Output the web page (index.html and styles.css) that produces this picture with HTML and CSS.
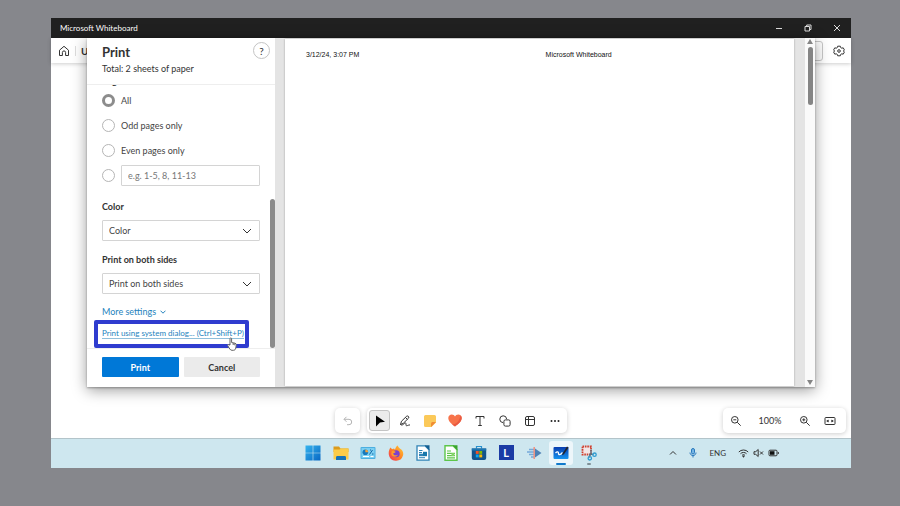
FILE: index.html
```html
<!DOCTYPE html>
<html lang="en">
<head>
<meta charset="utf-8">
<title>Microsoft Whiteboard</title>
<link rel="stylesheet" href="styles.css">
</head>
<body>
<div class="window">
  <header class="titlebar">
    <span class="titlebar-name">Microsoft Whiteboard</span>
    <button class="caption" aria-label="Minimize"><svg width="8" height="8" viewBox="0 0 8 8"><path d="M1 4.500h6"/></svg></button>
    <button class="caption" aria-label="Restore"><svg width="8" height="8" viewBox="0 0 8 8"><path d="M1 2.500h4.500V7H1zM2.700 2.300V1H7v4.500H5.700"/></svg></button>
    <button class="caption" aria-label="Close"><svg width="8" height="8" viewBox="0 0 8 8"><path d="M1 1l6 6M7 1L1 7"/></svg></button>
  </header>

  <main class="stage">
    <nav class="appbar">
      <button class="icon-button" aria-label="Home"><svg class="line" width="12" height="12" viewBox="0 0 12 12"><path d="M1.500 5.200L6 1.300l4.500 3.900v5.300H7.600V7.500a1.600 1.600 0 0 0-3.200 0v3H1.500z"/></svg></button>
      <span class="divider"></span>
      <strong class="board-name">U</strong>
      <button class="share" aria-label="Share"></button>
      <button class="icon-button" aria-label="Settings"><svg class="line" width="12" height="12" viewBox="0 0 12 12"><path d="M4.700 1.200h2.600l.4 1.400 1.100.6 1.400-.4 1.200 2.100-1 1.100 1 1.100-1.200 2.100-1.400-.4-1.100.6-.4 1.400H4.700l-.4-1.400-1.100-.6-1.400.4L.600 7.100l1-1.100-1-1.100 1.200-2.100 1.400.4 1.100-.6z"/><circle cx="6" cy="6" r="1.300"/></svg></button>
    </nav>

    <div class="canvas"></div>

    <div class="tools">
      <div class="tools-center">
        <div class="card"><button class="tool" aria-label="Undo"><svg class="line faint" width="12" height="12" viewBox="0 0 12 12"><path d="M4.500 1.800L2 4.300l2.500 2.500M2 4.300h5a2.700 2.700 0 0 1 0 5.400H5"/></svg></button></div>
        <div class="card">
          <button class="tool selected" aria-label="Select"><svg width="12" height="12" viewBox="0 0 12 12"><path d="M2 .5l9 6.300-5 .7L2 11.500z" fill="#000"/></svg></button>
          <button class="tool" aria-label="Ink"><svg class="line" width="12" height="12" viewBox="0 0 12 12"><path d="M1.500 9.500l1-3.300L7.700 1.200c1.300-.8 2.700.6 1.900 1.900L4.300 8.300zM6.500 2.500l1.900 1.900M1.500 9.500c2 1.800 3.500-1.500 5-1.500s-.5 2.700 1 2.700 2-1 3.500-.7"/></svg></button>
          <button class="tool" aria-label="Note"><svg width="12" height="12" viewBox="0 0 12 12"><path d="M1.500 0h9A1.500 1.500 0 0 1 12 1.500V7.500L7.500 12h-6A1.500 1.500 0 0 1 0 10.500v-9A1.500 1.500 0 0 1 1.500 0z" fill="#fbc959"/><path d="M12 7L7 12V8.500Q7 7 8.500 7z" fill="#f08c35"/></svg></button>
          <button class="tool" aria-label="Reactions"><svg width="14" height="13" viewBox="0 0 14 13"><path d="M7 12.500C4 10.500.3 7.500.3 4.100.3 1.800 2 .5 3.700.5 5.200.5 6.500 1.300 7 2.500 7.500 1.300 8.800.5 10.300.5c1.700 0 3.400 1.300 3.400 3.600 0 3.400-3.700 6.400-6.700 8.400z" fill="#f7734a"/><path d="M13.700 4.100c0 3.400-3.700 6.400-6.700 8.400-1-.7-2-1.400-3-2.300 4 .3 7-2.200 8.500-9 .7.700 1.200 1.700 1.200 2.900z" fill="#ea5a42"/></svg></button>
          <button class="tool" aria-label="Text"><svg class="line" width="12" height="12" viewBox="0 0 12 12"><path d="M2 3.500V1.500h8v2M6 1.500v9M4.200 10.500h3.600"/></svg></button>
          <button class="tool" aria-label="Shapes"><svg class="line" width="12" height="12" viewBox="0 0 12 12"><path d="M4 7.600A3.400 3.400 0 1 1 7.600 4"/><rect x="4.900" y="4.900" width="6.200" height="6.200" rx="1.500"/></svg></button>
          <button class="tool" aria-label="Templates"><svg class="line" width="12" height="12" viewBox="0 0 12 12"><rect x="1.500" y="1.500" width="9" height="9" rx="1.500"/><path d="M4.500 1.500v9M1.500 4.500h9"/></svg></button>
          <button class="tool" aria-label="More"><svg width="12" height="12" viewBox="0 0 12 12" fill="#222"><circle cx="2.500" cy="6" r="1"/><circle cx="6" cy="6" r="1"/><circle cx="9.500" cy="6" r="1"/></svg></button>
        </div>
      </div>
      <div class="card zoombar">
        <button class="tool" aria-label="Zoom out"><svg class="line" width="12" height="12" viewBox="0 0 12 12"><circle cx="4.800" cy="4.800" r="3.300"/><path d="M7.300 7.300L10.700 10.700M3.300 4.800h3"/></svg></button>
        <span class="zoom-level">100%</span>
        <button class="tool" aria-label="Zoom in"><svg class="line" width="12" height="12" viewBox="0 0 12 12"><circle cx="4.800" cy="4.800" r="3.300"/><path d="M7.300 7.300L10.700 10.700M3.300 4.800h3M4.800 3.300v3"/></svg></button>
        <button class="tool" aria-label="Fit to screen"><svg class="line" width="12" height="12" viewBox="0 0 12 12"><rect x="1" y="2.500" width="10" height="7" rx=".8"/><path d="M2.700 6h2.300M7 6h2.300"/><path d="M4.400 4.600v2.800L2.500 6zM7.600 4.600v2.800L9.500 6z" fill="#333" stroke="none"/></svg></button>
      </div>
    </div>

    <section class="dialog" role="dialog" aria-label="Print">
      <form class="settings">
        <div class="settings-head">
          <div>
            <h1>Print</h1>
            <p>Total: 2 sheets of paper</p>
          </div>
          <button type="button" class="help" aria-label="Help">?</button>
        </div>
        <div class="settings-scroll">
          <div class="settings-body">
            <h2 class="pages">Pages</h2>
            <label class="choice"><input type="radio" name="pages" checked>All</label>
            <label class="choice"><input type="radio" name="pages">Odd pages only</label>
            <label class="choice"><input type="radio" name="pages">Even pages only</label>
            <div class="choice"><input type="radio" name="pages" aria-label="Page range"><input class="range" type="text" placeholder="e.g. 1-5, 8, 11-13" aria-label="Pages to print"></div>
            <label class="field-label" for="color">Color</label>
            <div class="select">
              <select id="color"><option>Color</option></select>
              <svg class="line chevron" width="10" height="6" viewBox="0 0 10 6"><path d="M1 1l4 4 4-4"/></svg>
            </div>
            <label class="field-label" for="sides">Print on both sides</label>
            <div class="select">
              <select id="sides"><option>Print on both sides</option></select>
              <svg class="line chevron" width="10" height="6" viewBox="0 0 10 6"><path d="M1 1l4 4 4-4"/></svg>
            </div>
            <a class="more" href="#">More settings <svg width="6" height="4" viewBox="0 0 6 4"><path d="M.5.700L3 3.200 5.500.700"/></svg></a>
            <div class="system"><a href="#">Print using system dialog... (Ctrl+Shift+P)</a></div>
          </div>
          <div class="thumb"></div>
        </div>
        <div class="settings-foot">
          <button type="button" class="primary">Print</button>
          <button type="button">Cancel</button>
        </div>
        <span class="highlight"></span>
        <svg class="pointer" width="10" height="14" viewBox="0 0 10 14"><path d="M3 8V1.800c0-1.200 1.600-1.200 1.600 0V5.500l3.400.7c.9.2 1.300.8 1.300 1.600L8.800 11c-.3 1.500-1 2.300-2.500 2.300H5c-1 0-1.600-.4-2.200-1.300L.8 8.800c-.6-1 .5-1.600 1.200-.9zM6.200 6v2M7.800 6.300v2"/></svg>
      </form>
      <div class="preview">
        <article class="paper"><span>3/12/24, 3:07 PM</span><span class="paper-title">Microsoft Whiteboard</span></article>
      </div>
      <div class="scrollbar">
        <svg width="6" height="5" viewBox="0 0 6 5"><path d="M0 5L3 0l3 5z"/></svg>
        <div class="scroll-thumb"></div>
        <svg width="6" height="5" viewBox="0 0 6 5"><path d="M0 0h6L3 5z"/></svg>
      </div>
    </section>
  </main>

  <footer class="taskbar">
    <div class="apps">
      <button class="app" aria-label="Start"><svg width="16" height="16" viewBox="0 0 16 16"><defs><linearGradient id="win" x2="1" y2="1"><stop stop-color="#35b4ee"/><stop offset="1" stop-color="#0867c4"/></linearGradient></defs><path d="M.5.500h7.200v7.200H.5zM8.300.500h7.200v7.200H8.300zM.5 8.300h7.200v7.200H.5zM8.300 8.300h7.200v7.200H8.300z" fill="url(#win)"/></svg></button>
      <button class="app" aria-label="File Explorer"><svg width="16" height="16" viewBox="0 0 16 16"><path d="M.5 3V1.500h5.500L7.500 3.500h8V7H.5z" fill="#dc9b1c"/><path d="M.5 4.500h6l1.500-1h7.500v11H.5z" fill="#fbcc48"/><path d="M3 15v-2.500c0-1 .5-1.500 1.500-1.500h7c1 0 1.500.5 1.500 1.500V15z" fill="#1473b8"/></svg></button>
      <button class="app" aria-label="Control Panel"><svg width="16" height="16" viewBox="0 0 16 16"><rect x=".5" y="2" width="15" height="12" rx="1" fill="#4cafe0"/><rect x="1.500" y="3" width="13" height="10" fill="#7bd0f3"/><circle cx="5.300" cy="7.300" r="2.800" fill="#1679bd"/><path d="M5.300 7.300V4.500a2.800 2.800 0 0 1 2.800 2.800z" fill="#f6a13a"/><path d="M9.500 9.500l3-4.500M10 5h1M12 9h1.500" stroke="#14649f"/><path d="M3 11.500h6M10.500 11.500h3" stroke="#fff"/></svg></button>
      <button class="app" aria-label="Firefox"><svg width="16" height="16" viewBox="0 0 16 16"><defs><linearGradient id="fox" x1="1" x2="0" y2="1"><stop stop-color="#ffd43a"/><stop offset=".5" stop-color="#ff8126"/><stop offset="1" stop-color="#f02c60"/></linearGradient></defs><path d="M2.500 2.500l1.600 1.700L6 3.500l1 1.200C7.500 2.500 8.500 1 9.800.500c.3 1.500 1.200 2 2.400 3.200C15 5.500 15.700 8 15 10.500A7.300 7.300 0 0 1 .8 9.500C.5 7 1 4.500 2.500 2.500z" fill="url(#fox)"/><circle cx="8.200" cy="8.800" r="3.500" fill="#7a3fd0"/><path d="M3.800 6.300c1.500-.8 3-.3 4 .7-1 .9-2 1.100-2.700 1.500.5 2 3.500 2.500 4.800 1-1 3.500-6 2.500-6.700-.5z" fill="#ff9a2b"/></svg></button>
      <button class="app" aria-label="Writer"><svg width="16" height="16" viewBox="0 0 16 16"><path d="M2 .800h8l4 4v10.400H2z" fill="#fff" stroke="#2f83b6" stroke-width="1.300"/><path d="M9.500.300h5V5.500z" fill="#155f92"/><path d="M4 5.500h3.500M4 7.500h3M4 12.700h6" stroke="#2f83b6"/><rect x="4" y="8.700" width="4" height="2.500" fill="#2f83b6"/><rect x="8" y="6.800" width="4" height="4.400" fill="#1877ab"/></svg></button>
      <button class="app" aria-label="Calc"><svg width="16" height="16" viewBox="0 0 16 16"><path d="M2 .800h8l4 4v10.400H2z" fill="#fff" stroke="#5cc54a" stroke-width="1.400"/><path d="M9.500.300h5V5.500z" fill="#3aa52e"/><path d="M4 6h4M4 8.300h8M4 10.600h8M4 12.800h8" stroke="#5cc54a" stroke-width="1.200"/><rect x="8.500" y="8" width="3" height="3" fill="#83d469"/></svg></button>
      <button class="app" aria-label="Store"><svg width="16" height="16" viewBox="0 0 16 16"><path d="M5.500 3.500V1.500h5v2" fill="none" stroke="#2791cf" stroke-width="1.200"/><path d="M.8 3.500h14.400v9.500a2 2 0 0 1-2 2H2.800a2 2 0 0 1-2-2z" fill="#12548c"/><path d="M.8 3.500h14.400v2H.8z" fill="#1c76b2"/><path d="M4.800 6h2.900v2.900H4.800z" fill="#f35325"/><path d="M8.300 6h2.900v2.900H8.300z" fill="#81bc06"/><path d="M4.800 9.500h2.900v2.900H4.800z" fill="#05a6f0"/><path d="M8.300 9.500h2.900v2.900H8.300z" fill="#ffba08"/></svg></button>
      <button class="app" aria-label="L"><span class="letter-app">L</span></button>
      <button class="app" aria-label="Media"><svg width="16" height="16" viewBox="0 0 16 16"><path d="M3 4.500h5M1 7h7M3 9.500h5M5 12h3" stroke="#76a9da" stroke-width="1.500"/><path d="M9 3.500L15.500 8 9 12.500z" fill="#4f82b5"/><path d="M8.200 2v12" stroke="#f1917f" stroke-width="1.500"/></svg></button>
      <button class="app active" aria-label="Whiteboard"><svg width="16" height="16" viewBox="0 0 16 16"><defs><linearGradient id="wb" x2="0" y2="1"><stop stop-color="#0a3dae"/><stop offset="1" stop-color="#1694f0"/></linearGradient></defs><rect x=".5" y="2" width="15" height="12" rx="1" fill="url(#wb)"/><path d="M2.500 8c2-2 3-1 3 .5s1.500 2 4-1" fill="none" stroke="#fff" stroke-width="1.300"/><path d="M9.500 8.500l4.500-7 1.500 1-4.500 6.800-2 .9z" fill="#20242f"/></svg></button>
      <button class="app running" aria-label="Snipping Tool"><svg width="16" height="16" viewBox="0 0 16 16"><rect x="1.500" y="1.500" width="8.500" height="8" fill="#f3e6e6" stroke="#d0402f" stroke-width="1.800" stroke-dasharray="1.600 .8"/><path d="M10 4.500v4L7.500 13M8 9.300h4.500" fill="none" stroke="#5b7180" stroke-width="1.300"/><circle cx="13.500" cy="9.700" r="1.700" fill="none" stroke="#2e9bd0" stroke-width="1.300"/><circle cx="8.800" cy="13.300" r="1.700" fill="none" stroke="#2e9bd0" stroke-width="1.300"/></svg></button>
    </div>
    <div class="tray">
      <svg class="line" width="8" height="6" viewBox="0 0 8 6"><path d="M1 4.500l3-3 3 3"/></svg>
      <svg class="mic" width="8" height="10" viewBox="0 0 8 10"><rect x="2.500" y=".5" width="3" height="5.500" rx="1.500" fill="#74b4e4"/><path d="M1 4.500c0 4 6 4 6 0M4 7.500v2"/></svg>
      <span>ENG</span>
      <div class="status">
        <svg class="line" width="11" height="10" viewBox="0 0 11 10"><path d="M.8 4a6.500 6.500 0 0 1 9.400 0M2.500 5.700a4.200 4.200 0 0 1 6 0M4 7.300a2.200 2.200 0 0 1 3 0"/><circle cx="5.500" cy="8.500" r=".6" fill="#333"/></svg>
        <svg class="line" width="11" height="10" viewBox="0 0 11 10"><path d="M1 3.700h1.700L5.200 1.500v7L2.700 6.300H1zM7 3.500l3 3M10 3.500l-3 3"/></svg>
        <svg class="line" width="11" height="10" viewBox="0 0 11 10"><rect x="1" y="2.200" width="8" height="5.600" rx="1"/><rect x="2" y="3.200" width="4.500" height="3.600" fill="#111" stroke="none"/><path d="M10.300 4v2"/></svg>
      </div>
    </div>
  </footer>
</div>
</body>
</html>
```
FILE: styles.css
```css
* {
  box-sizing: border-box;
}

body {
  margin: 0;
  min-height: 100vh;
  display: flex;
  padding: 18px 49px 38px 51px;
  background: #86878c;
  color: #333;
  font-family: Lato, "Noto Sans", sans-serif;
  font-size: 9px;
}

button,
input,
select {
  font: inherit;
  color: inherit;
  margin: 0;
}

button {
  display: flex;
  align-items: center;
  justify-content: center;
  padding: 0;
  border: 0;
  background: none;
}

svg {
  display: block;
  flex: none;
}

.line {
  fill: none;
  stroke: #333;
  stroke-width: 1;
  stroke-linejoin: round;
}

.faint {
  stroke: #b5b5b5;
}

.window {
  flex: 1;
  min-width: 0;
  display: flex;
  flex-direction: column;
  background: #fff;
}

/* Title bar */
.titlebar {
  height: 20px;
  display: flex;
  align-items: stretch;
  background: #202020;
  color: #fff;
  font-size: 8px;
}

.titlebar-name {
  flex: 1;
  padding-left: 9px;
  line-height: 20px;
}

.caption {
  width: 29px;
}

.caption svg {
  fill: none;
  stroke: #ddd;
}

/* Whiteboard */
.stage {
  flex: 1;
  position: relative;
  display: flex;
  flex-direction: column;
}

.appbar {
  height: 25px;
  display: flex;
  align-items: center;
  padding: 0 5px;
  box-shadow: 0 1px 4px rgba(0, 0, 0, .2);
}

.icon-button {
  width: 15px;
  height: 20px;
}

.divider {
  width: 1px;
  height: 10px;
  margin: 0 5px 0 4px;
  background: #ddd;
}

.board-name {
  font-size: 10px;
}

.share {
  width: 48px;
  height: 20px;
  margin: 0 8px 0 auto;
  border: 1px solid #c8c8c8;
  border-radius: 3px;
}

.canvas {
  flex: 1;
}

.tools {
  display: grid;
  grid-template-columns: 1fr auto 1fr;
  padding: 0 5px 5px;
}

.tools-center {
  grid-column: 2;
  display: flex;
  gap: 7px;
}

.card {
  display: flex;
  align-items: center;
  gap: 4px;
  height: 25px;
  padding: 0 2px;
  border-radius: 5px;
  background: #fff;
  box-shadow: 0 1px 5px rgba(0, 0, 0, .2);
}

.tool {
  width: 21px;
  height: 21px;
  border-radius: 3px;
}

.selected {
  border: 1px solid #c4c4c4;
  background: #ececec;
}

.zoombar {
  justify-self: end;
  padding: 0 6px 0 2px;
}

.zoom-level {
  width: 40px;
  text-align: center;
}

/* Print dialog, laid over the board */
.dialog {
  position: absolute;
  inset: 0 36px 51px;
  display: flex;
  background: #fff;
  box-shadow: 0 3px 14px rgba(0, 0, 0, .4), 0 1px 2px rgba(0, 0, 0, .3);
}

.settings {
  position: relative;
  width: 188px;
  display: flex;
  flex-direction: column;
}

.settings-head {
  display: flex;
  justify-content: space-between;
  height: 46px;
  padding: 4px 5px 0 15px;
}

h1 {
  margin: 0;
  font-size: 13px;
  font-weight: 700;
  line-height: 21px;
}

p {
  margin: 0;
  line-height: 11px;
}

.help {
  width: 17px;
  height: 17px;
  border: 1px solid #c4c4c4;
  border-radius: 50%;
  font-size: 10px;
}

.settings-scroll {
  flex: 1;
  min-height: 0;
  display: flex;
  border: solid #eee;
  border-width: 1px 0;
  overflow: hidden;
}

.settings-body {
  flex: 1;
  display: flex;
  flex-direction: column;
  justify-content: flex-end;
  padding: 0 15px 4px;
}

.settings-body > * {
  flex-shrink: 0;
}

.pages {
  margin: 0;
  font-size: 9px;
  font-weight: 700;
  line-height: 14px;
}

.choice {
  display: flex;
  align-items: center;
  gap: 6px;
  height: 25px;
  color: #444;
}

.choice input[type="radio"] {
  appearance: none;
  flex: none;
  width: 13px;
  height: 13px;
  border: 1px solid #b5b5b5;
  border-radius: 50%;
  background: #fff;
}

.choice input[type="radio"]:checked {
  border: 3px solid #8c8c8c;
}

.range {
  flex: 1;
  min-width: 0;
  height: 21px;
  padding: 0 6px;
  border: 1px solid #d4d4d4;
  border-radius: 1px;
}

.range::placeholder {
  color: #777;
}

.field-label {
  margin-top: 9px;
  margin-bottom: 3px;
  font-weight: 700;
  line-height: 20px;
}

.select {
  display: grid;
  align-items: center;
}

.select select,
.chevron {
  grid-area: 1 / 1;
}

.select select {
  appearance: none;
  width: 100%;
  height: 21px;
  padding: 0 6px;
  border: 1px solid #d4d4d4;
  border-radius: 1px;
  background: #fff;
  color: #444;
}

.chevron {
  justify-self: end;
  margin-right: 8px;
  pointer-events: none;
}

.more {
  display: flex;
  align-items: center;
  gap: 4px;
  margin-top: 8px;
  color: #2583bd;
  line-height: 20px;
  text-decoration: none;
}

.more svg {
  fill: none;
  stroke: #2583bd;
}

.system {
  display: flex;
  align-items: center;
  height: 22px;
  font-size: 8px;
}

.system a {
  border-bottom: 1px solid #8fbfdb;
  color: #2583bd;
  line-height: 10px;
  text-decoration: none;
  white-space: nowrap;
}

.highlight {
  position: absolute;
  left: 7px;
  bottom: 39px;
  width: 155px;
  height: 28px;
  border: 4px solid #2f3ccf;
  border-radius: 2px;
}

.pointer {
  position: absolute;
  left: 140px;
  bottom: 36px;
  fill: #fff;
  stroke: #666;
  stroke-width: 1;
}

.thumb {
  width: 5px;
  margin-left: -5px;
  margin-top: 114px;
  border-radius: 3px;
  background: #8b8b8b;
}

.settings-foot {
  display: flex;
  gap: 5px;
  padding: 8px 15px 10px;
}

.settings-foot button {
  flex: 1;
  height: 20px;
  border-radius: 1px;
  background: #ebebeb;
  font-weight: 700;
}

.settings-foot .primary {
  background: #0078d7;
  color: #fff;
}

.preview {
  flex: 1;
  display: flex;
  padding: 1px 11px 1px 10px;
  background: #e4e4e4;
}

.paper {
  flex: 1;
  display: flex;
  gap: 4px;
  padding: 10px 0 0 21px;
  background: #fff;
  box-shadow: 0 0 2px rgba(0, 0, 0, .3);
  color: #111;
  font-family: "Liberation Sans", sans-serif;
  font-size: 7px;
  line-height: 11px;
}

.paper-title {
  flex: 1;
  text-align: center;
}

.scrollbar {
  width: 10px;
  display: flex;
  flex-direction: column;
  align-items: center;
  padding: 1px 0 2px;
  background: #fafafa;
}

.scrollbar svg {
  fill: #858585;
}

.scroll-thumb {
  width: 5px;
  height: 58px;
  margin: 3px 0 auto;
  border-radius: 3px;
  background: #858585;
}

/* Taskbar */
.taskbar {
  height: 30px;
  display: grid;
  grid-template-columns: 1fr auto 1fr;
  align-items: center;
  padding-bottom: 2px;
  border-top: 1px solid #b3c4ca;
  background: #cee7ef;
}

.apps {
  grid-column: 2;
  width: 300px;
  display: flex;
  justify-content: space-between;
}

.app {
  position: relative;
  width: 24px;
  height: 24px;
  border-radius: 3px;
}

.active {
  background: #edf6fa;
}

.active::after,
.running::after {
  content: "";
  position: absolute;
  bottom: 0;
  width: 10px;
  height: 2px;
  border-radius: 1px;
  background: #1179cb;
}

.running::after {
  width: 4px;
  background: #7f8f96;
}

.letter-app {
  width: 15px;
  height: 15px;
  background: #1b3ba5;
  color: #fff;
  font-size: 11px;
  font-weight: 700;
  line-height: 15px;
}

.tray {
  justify-self: end;
  display: flex;
  align-items: center;
  gap: 12px;
  padding-right: 72px;
  font-size: 8px;
}

.mic {
  fill: none;
  stroke: #2878bd;
}

.status {
  display: flex;
  gap: 4px;
}
```
